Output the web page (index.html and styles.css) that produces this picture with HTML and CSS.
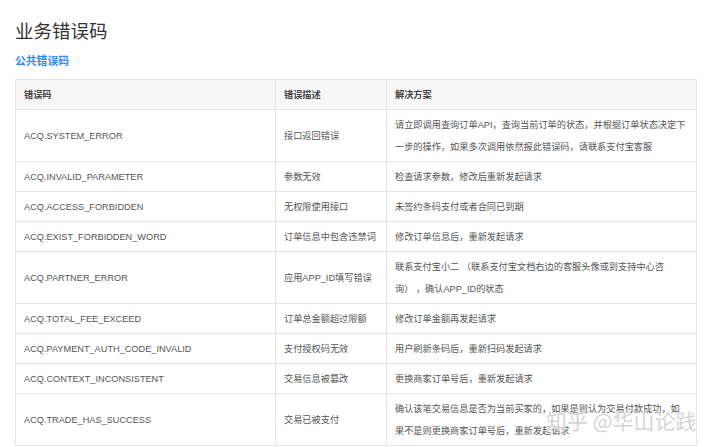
FILE: index.html
```html
<!DOCTYPE html>
<html lang="zh-CN">
<head>
<meta charset="utf-8">
<title>业务错误码</title>
<link rel="stylesheet" href="styles.css">
</head>
<body>
<main class="page">
  <h1 class="title">业务错误码</h1>
  <h2 class="subtitle">公共错误码</h2>
  <table class="codes">
    <colgroup>
      <col class="c-code">
      <col class="c-desc">
      <col class="c-sol">
    </colgroup>
    <thead>
      <tr><th>错误码</th><th>错误描述</th><th>解决方案</th></tr>
    </thead>
    <tbody>
      <tr><td>ACQ.SYSTEM_ERROR</td><td>接口返回错误</td><td>请立即调用查询订单API，查询当前订单的状态，并根据订单状态决定下一步的操作，如果多次调用依然报此错误码，请联系支付宝客服</td></tr>
      <tr><td>ACQ.INVALID_PARAMETER</td><td>参数无效</td><td>检查请求参数，修改后重新发起请求</td></tr>
      <tr><td>ACQ.ACCESS_FORBIDDEN</td><td>无权限使用接口</td><td>未签约条码支付或者合同已到期</td></tr>
      <tr><td>ACQ.EXIST_FORBIDDEN_WORD</td><td>订单信息中包含违禁词</td><td>修改订单信息后，重新发起请求</td></tr>
      <tr><td>ACQ.PARTNER_ERROR</td><td>应用APP_ID填写错误</td><td>联系支付宝小二 （联系支付宝文档右边的客服头像或到支持中心咨<br>询） ，确认APP_ID的状态</td></tr>
      <tr><td>ACQ.TOTAL_FEE_EXCEED</td><td>订单总金额超过限额</td><td>修改订单金额再发起请求</td></tr>
      <tr><td>ACQ.PAYMENT_AUTH_CODE_INVALID</td><td>支付授权码无效</td><td>用户刷新条码后，重新扫码发起请求</td></tr>
      <tr><td>ACQ.CONTEXT_INCONSISTENT</td><td>交易信息被篡改</td><td>更换商家订单号后，重新发起请求</td></tr>
      <tr><td>ACQ.TRADE_HAS_SUCCESS</td><td>交易已被支付</td><td>确认该笔交易信息是否为当前买家的，如果是则认为交易付款成功，如果不是则更换商家订单号后，重新发起请求</td></tr>
    </tbody>
  </table>
</main>
<div class="watermark">知乎 @华山论践</div>
</body>
</html>
```

FILE: styles.css
```css
html, body {
  margin: 0;
  padding: 0;
  background: #ffffff;
}

body {
  font-family: "Liberation Sans", "Noto Sans CJK SC", sans-serif;
  color: #555555;
  overflow: hidden;
}

.page {
  padding: 17px 24px 0 15px;
}

.title {
  margin: 0;
  font-family: "Noto Sans CJK SC", sans-serif;
  font-size: 18.5px;
  font-weight: 400;
  line-height: 26px;
  color: #333333;
}

.subtitle {
  margin: 8px 0 0;
  font-family: "Noto Sans CJK SC", sans-serif;
  font-size: 10.8px;
  font-weight: 700;
  line-height: 18px;
  color: #2d8cf0;
}

.codes {
  margin-top: 10px;
  width: 681px;
  border-collapse: collapse;
  table-layout: fixed;
  font-size: 9.2px;
}

.c-code { width: 260px; }
.c-desc { width: 111px; }
.c-sol  { width: 310px; }

.codes th,
.codes td {
  border: 1px solid #e6e6e6;
  padding: 4px 8px 3px;
  line-height: 22px;
  text-align: left;
  vertical-align: middle;
}

.codes th {
  background: #f7f7f7;
  font-weight: 700;
  color: #444444;
}

.watermark {
  position: absolute;
  left: 546px;
  top: 405px;
  font-family: "Noto Sans CJK SC", sans-serif;
  font-size: 21px;
  line-height: 30px;
  color: rgba(170, 170, 170, 0.5);
  text-shadow: 0 0 2px #ffffff, 0 0 1px #ffffff;
  white-space: nowrap;
  pointer-events: none;
}
```
